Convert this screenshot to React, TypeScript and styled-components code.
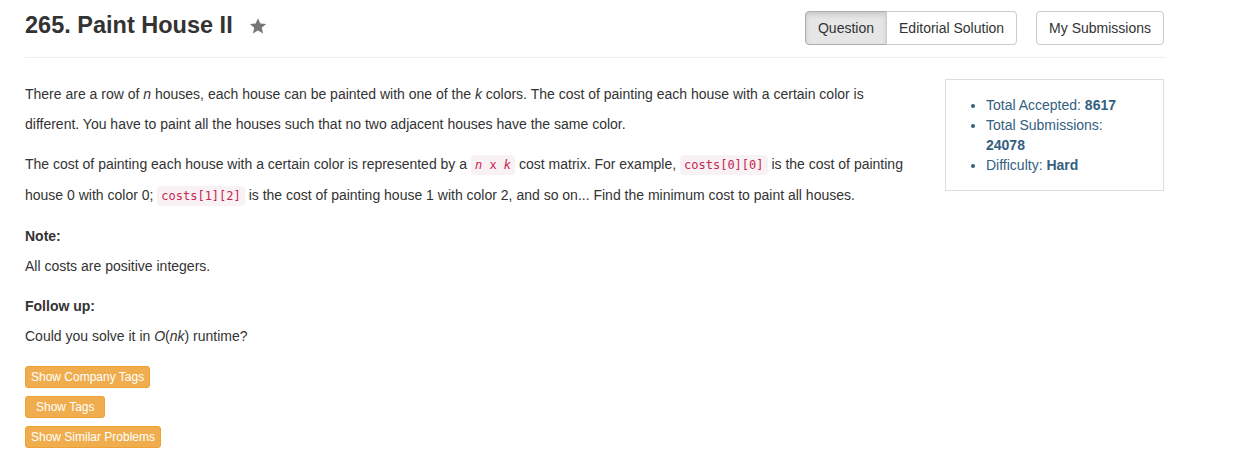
import styled, { createGlobalStyle, css } from "styled-components";

const GlobalStyle = createGlobalStyle`
  * {
    box-sizing: border-box;
  }
  body {
    margin: 0;
    background: #fff;
    color: #333;
    font-family: "Liberation Sans", Arial, Helvetica, sans-serif;
    font-size: 14px;
  }
`;

function Star() {
  return (
    <StarIcon viewBox="0 0 24 24" aria-hidden>
      <path d="M12 1.5l3.1 7.2 7.8.6-5.9 5.1 1.8 7.6L12 17.9 5.2 22l1.8-7.6L1.1 9.3l7.8-.6z" />
    </StarIcon>
  );
}

function App() {
  return (
    <Page>
      <GlobalStyle />
      <Header>
        <TitleWrap>
          <Title>265. Paint House II</Title>
          <Star />
        </TitleWrap>
        <Actions>
          <BtnGroup>
            <NavButton $active>Question</NavButton>
            <NavButton>Editorial Solution</NavButton>
          </BtnGroup>
          <NavButton $single>My Submissions</NavButton>
        </Actions>
      </Header>

      <Row>
        <Description>
          <p>
            There are a row of <i>n</i> houses, each house can be painted with
            one of the <i>k</i> colors. The cost of painting each house with a
            certain color is different. You have to paint all the houses such
            that no two adjacent houses have the same color.
          </p>
          <p>
            The cost of painting each house with a certain color is represented
            by a{" "}
            <Code>
              <i>n</i> x <i>k</i>
            </Code>{" "}
            cost matrix. For example, <Code>costs[0][0]</Code> is the cost of
            painting house 0 with color 0; <Code>costs[1][2]</Code> is the cost
            of painting house 1 with color 2, and so on... Find the minimum cost
            to paint all houses.
          </p>
          <p>
            <b>Note:</b>
            <br />
            All costs are positive integers.
          </p>
          <p>
            <b>Follow up:</b>
            <br />
            Could you solve it in <i>O</i>(<i>nk</i>) runtime?
          </p>

          <TagButtons>
            <TagButton>Show Company Tags</TagButton>
            <TagButton $wide>Show Tags</TagButton>
            <TagButton>Show Similar Problems</TagButton>
          </TagButtons>
        </Description>

        <Stats>
          <ul>
            <li>
              Total Accepted: <b>8617</b>
            </li>
            <li>
              Total Submissions: <b>24078</b>
            </li>
            <li>
              Difficulty: <b>Hard</b>
            </li>
          </ul>
        </Stats>
      </Row>
    </Page>
  );
}

const Page = styled.div`
  width: 1140px;
  margin-left: 25px;
`;

const Header = styled.header`
  display: flex;
  justify-content: space-between;
  align-items: flex-start;
  padding: 11px 0 12px;
  border-bottom: 1px solid #eee;
`;

const TitleWrap = styled.div`
  display: flex;
  align-items: center;
  gap: 16px;
  margin-top: 1px;
`;

const Title = styled.h3`
  margin: 0;
  font-size: 23.5px;
  font-weight: 700;
  line-height: 26px;
  color: #333;
`;

const StarIcon = styled.svg`
  width: 18px;
  height: 18px;
  fill: #777;
  margin-top: 1px;
`;

const Actions = styled.div`
  display: flex;
  gap: 19px;
  margin-right: 1px;
`;

const BtnGroup = styled.div`
  display: flex;

  & > button:first-child {
    border-radius: 4px 0 0 4px;
  }
  & > button:last-child {
    border-radius: 0 4px 4px 0;
    margin-left: -1px;
  }
`;

const NavButton = styled.button<{ $active?: boolean; $single?: boolean }>`
  font-family: inherit;
  font-size: 14px;
  line-height: 20px;
  padding: 6px 12px;
  color: #333;
  background: #fff;
  border: 1px solid #ccc;
  border-radius: ${(p) => (p.$single ? "4px" : "0")};
  cursor: pointer;

  ${(p) =>
    p.$active &&
    css`
      background: #e6e6e6;
      border-color: #adadad;
      box-shadow: inset 0 3px 5px rgba(0, 0, 0, 0.125);
    `}
`;

const Row = styled.div`
  display: flex;
  align-items: flex-start;
  gap: 32px;
  margin-top: 21px;
`;

const Description = styled.div`
  width: 888px;

  p {
    margin: 0 0 10px;
    line-height: 30px;
  }
`;

const Code = styled.code`
  font-family: "DejaVu Sans Mono", Menlo, monospace;
  font-size: 12px;
  padding: 3px 4px;
  color: #c7254e;
  background: #f9f2f4;
  border-radius: 4px;
`;

const TagButtons = styled.div`
  display: flex;
  flex-direction: column;
  align-items: flex-start;
  gap: 8px;
  padding-top: 5px;
`;

const TagButton = styled.button<{ $wide?: boolean }>`
  font-family: inherit;
  font-size: 12px;
  line-height: 18px;
  padding: ${(p) => (p.$wide ? "1px 10px" : "1px 5px")};
  color: #fff;
  background: #f0ad4e;
  border: 1px solid #eea236;
  border-radius: 3px;
  cursor: pointer;
`;

const Stats = styled.div`
  width: 219px;
  border: 1px solid #ddd;

  ul {
    margin: 15px 0;
    padding: 0 25px 0 40px;
    line-height: 20px;
    color: #34607f;
  }
`;

export default App;
